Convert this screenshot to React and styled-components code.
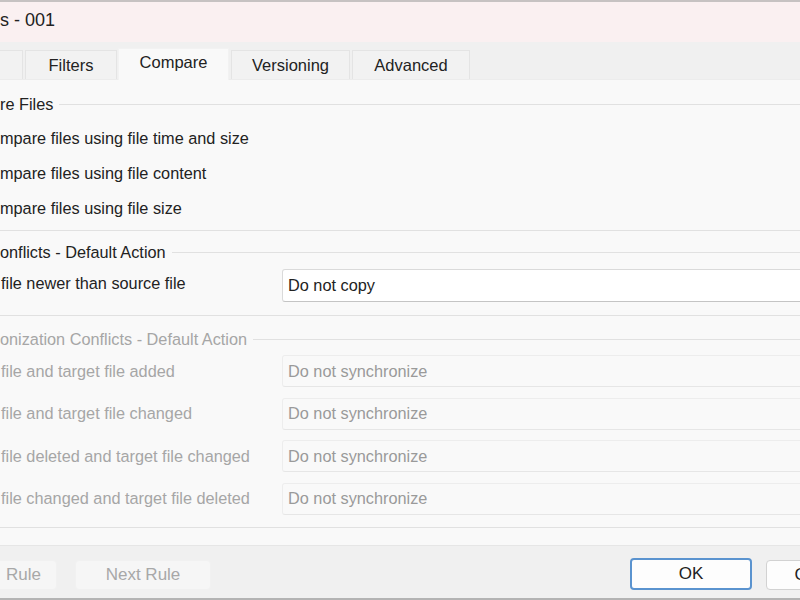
import React from "react";
import styled, { createGlobalStyle } from "styled-components";

const GlobalStyle = createGlobalStyle`
  html, body {
    margin: 0;
    padding: 0;
    overflow: hidden;
    background: #f9f9f9;
  }
  #root {
    width: 800px;
    height: 600px;
  }
`;

const Window = styled.div`
  width: 800px;
  height: 600px;
  display: flex;
  flex-direction: column;
  overflow: hidden;
  font-family: "Liberation Sans", Arial, sans-serif;
  font-size: 16.3px;
  color: #222;
  border-top: 2px solid #c6c2c2;
  border-bottom: 2px solid #b3b3b3;
  box-sizing: border-box;
`;

const TitleBar = styled.div`
  height: 40px;
  flex: none;
  background: #faf0f1;
  display: flex;
  align-items: center;
  font-size: 18px;
  padding-bottom: 4px;
  box-sizing: border-box;
`;

const TabStrip = styled.div`
  height: 38px;
  flex: none;
  background: #f0f0f0;
  display: flex;
  align-items: flex-end;
  border-bottom: 1px solid #ececec;
  box-sizing: border-box;
`;

const Tab = styled.div`
  height: ${(p) => (p.$active ? "32px" : "29px")};
  width: ${(p) => p.$w}px;
  margin-left: ${(p) => p.$ml || 0}px;
  flex: none;
  box-sizing: border-box;
  display: flex;
  align-items: center;
  justify-content: center;
  font-size: 16.5px;
  color: #222;
  background: ${(p) => (p.$active ? "#f9f9f9" : "#f2f2f2")};
  border: 1px solid ${(p) => (p.$active ? "#f2f2f2" : "#e4e4e4")};
  border-bottom: none;
  padding-bottom: ${(p) => (p.$active ? "4px" : "0")};
  margin-bottom: ${(p) => (p.$active ? "-1px" : "0")};
`;

const Content = styled.div`
  flex: 1;
  background: #f9f9f9;
  display: flex;
  flex-direction: column;
`;

const Group = styled.div`
  margin-top: ${(p) => p.$mt}px;
  padding-bottom: ${(p) => p.$pb}px;
  border-bottom: 1px solid #e1e1e1;
  display: flex;
  flex-direction: column;
`;

const GroupTitle = styled.div`
  height: 22px;
  display: flex;
  align-items: center;
  gap: 6px;
  color: ${(p) => (p.$disabled ? "#a6a6a6" : "#222")};
  white-space: nowrap;
  &::after {
    content: "";
    flex: 1;
    height: 1px;
    background: #e1e1e1;
  }
`;

const Rows = styled.div`
  display: flex;
  flex-direction: column;
  gap: ${(p) => p.$gap}px;
  margin-top: ${(p) => p.$mt}px;
`;

const RadioRow = styled.div`
  height: 35px;
  display: flex;
  align-items: center;
  white-space: nowrap;
`;

const Row = styled.div`
  display: grid;
  grid-template-columns: 282px 1fr;
  align-items: center;
`;

const Label = styled.div`
  padding-left: 1px;
  color: ${(p) => (p.$disabled ? "#a6a6a6" : "#222")};
  white-space: nowrap;
  align-self: ${(p) => (p.$top ? "start" : "center")};
  padding-top: ${(p) => (p.$top ? "5px" : "0")};
`;

const Combo = styled.div`
  height: ${(p) => p.$h}px;
  margin-right: -20px;
  box-sizing: border-box;
  display: flex;
  align-items: center;
  padding-left: 5px;
  border-radius: 3px;
  white-space: nowrap;
  background: ${(p) => (p.$disabled ? "#f9f9f9" : "#ffffff")};
  color: ${(p) => (p.$disabled ? "#9a9a9a" : "#222")};
  border: 1px solid ${(p) => (p.$disabled ? "#ededed" : "#dadada")};
  border-bottom-color: ${(p) => (p.$disabled ? "#e6e6e6" : "#c4c4c4")};
`;

const BottomBar = styled.div`
  height: 53px;
  flex: none;
  background: #f0f0f0;
  border-top: 1px solid #e6e6e6;
  display: flex;
  align-items: flex-start;
  padding-top: 12px;
  box-sizing: border-box;
`;

const Button = styled.div`
  height: ${(p) => (p.$primary ? "32px" : "30px")};
  width: ${(p) => p.$w}px;
  margin-top: ${(p) => (p.$primary ? "0" : "2px")};
  margin-left: ${(p) => p.$ml || 0}px;
  margin-right: ${(p) => p.$mr || 0}px;
  box-sizing: border-box;
  display: flex;
  align-items: center;
  justify-content: ${(p) => p.$align || "center"};
  padding-left: ${(p) => p.$pl || 0}px;
  border-radius: 4px;
  font-size: 17px;
  flex: none;
  white-space: nowrap;
  color: ${(p) => (p.$disabled ? "#a8a8a8" : "#222")};
  background: ${(p) => (p.$disabled ? "#f6f6f6" : "#fdfdfd")};
  border: ${(p) =>
    p.$primary
      ? "2px solid #5a93cf"
      : p.$disabled
      ? "1px solid #f1f1f1"
      : "1px solid #d2d2d2"};
`;

const Spacer = styled.div`
  flex: 1;
`;

const syncRows = [
  "file and target file added",
  "file and target file changed",
  "file deleted and target file changed",
  "file changed and target file deleted",
];

export default function App() {
  return (
    <>
      <GlobalStyle />
      <Window>
        <TitleBar>s - 001</TitleBar>
        <TabStrip>
          <Tab $w={33} $ml={-10} />
          <Tab $w={92} $ml={2}>Filters</Tab>
          <Tab $w={111} $ml={1} $active>Compare</Tab>
          <Tab $w={119} $ml={2}>Versioning</Tab>
          <Tab $w={118} $ml={2}>Advanced</Tab>
        </TabStrip>
        <Content>
          <Group $mt={13} $pb={4}>
            <GroupTitle>re Files</GroupTitle>
            <Rows $gap={0} $mt={6}>
              <RadioRow>mpare files using file time and size</RadioRow>
              <RadioRow>mpare files using file content</RadioRow>
              <RadioRow>mpare files using file size</RadioRow>
            </Rows>
          </Group>
          <Group $mt={10} $pb={13}>
            <GroupTitle>onflicts - Default Action</GroupTitle>
            <Rows $gap={0} $mt={6}>
              <Row>
                <Label $top>file newer than source file</Label>
                <Combo $h={33}>Do not copy</Combo>
              </Row>
            </Rows>
          </Group>
          <Group $mt={12} $pb={12.5}>
            <GroupTitle $disabled>onization Conflicts - Default Action</GroupTitle>
            <Rows $gap={10.5} $mt={5}>
              {syncRows.map((label) => (
                <Row key={label}>
                  <Label $disabled>{label}</Label>
                  <Combo $h={32} $disabled>
                    Do not synchronize
                  </Combo>
                </Row>
              ))}
            </Rows>
          </Group>
        </Content>
        <BottomBar>
          <Button $w={67} $ml={-10} $disabled $align="flex-start" $pl={15}>
            Rule
          </Button>
          <Button $w={136} $ml={18} $disabled>
            Next Rule
          </Button>
          <Spacer />
          <Button $w={122} $primary>
            OK
          </Button>
          <Button $w={110} $ml={14} $mr={-76}>
            Cancel
          </Button>
        </BottomBar>
      </Window>
    </>
  );
}
